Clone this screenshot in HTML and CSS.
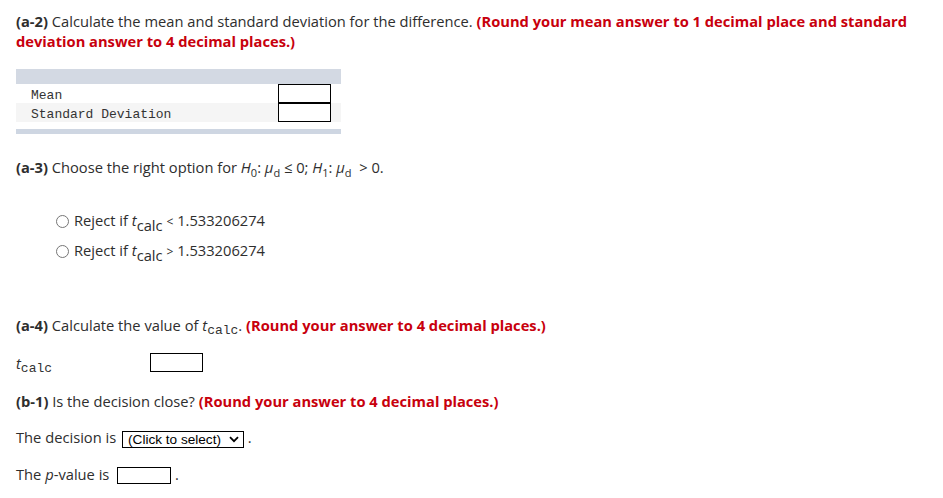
FILE: index.html
```html
<!DOCTYPE html>
<html>
<head>
<meta charset="utf-8">
<link rel="stylesheet" href="styles.css">
</head>
<body>
<div class="page">
  <p class="q q-a2"><b>(a-2)</b> Calculate the mean and standard deviation for the difference. <b class="red">(Round your mean answer to 1 decimal place and standard</b> <b class="red">deviation answer to 4 decimal places.)</b></p>

  <div class="tbl">
    <div class="tbl-head"></div>
    <div class="tbl-row">
      <span class="mono lbl">Mean</span>
      <span class="box"></span>
    </div>
    <div class="tbl-row alt">
      <span class="mono lbl">Standard Deviation</span>
      <span class="box"></span>
    </div>
    <div class="tbl-foot"></div>
  </div>

  <p class="q q-a3"><b>(a-3)</b> Choose the right option for <i>H</i><sub>0</sub>: <i>μ</i><sub>d</sub> ≤ 0; <i>H</i><sub>1</sub>: <i>μ</i><sub>d</sub>&nbsp; &gt; 0.</p>

  <div class="opts">
    <div class="opt"><span class="radio"></span>Reject if <i>t</i><sub class="big">calc</sub> <span class="sm">&lt;</span> 1.533206274</div>
    <div class="opt"><span class="radio"></span>Reject if <i>t</i><sub class="big">calc</sub> <span class="sm">&gt;</span> 1.533206274</div>
  </div>

  <p class="q q-a4"><b>(a-4)</b> Calculate the value of <i>t</i><sub class="mono">calc</sub>. <b class="red">(Round your answer to 4 decimal places.)</b></p>

  <div class="tline">
    <span class="tlabel"><i>t</i><sub class="mono">calc</sub></span>
    <span class="box"></span>
  </div>

  <p class="q q-b1"><b>(b-1)</b> Is the decision close? <b class="red">(Round your answer to 4 decimal places.)</b></p>

  <p class="line line-dec">The decision is <span class="sel">(Click to select)<svg width="10" height="7" viewBox="0 0 10 7"><path d="M1 1.2 L5 5.2 L9 1.2" fill="none" stroke="#000" stroke-width="1.8"/></svg></span> .</p>

  <p class="line line-p">The <i>p</i>-value is <span class="box box-p"></span> .</p>
</div>
</body>
</html>
```
FILE: styles.css
```css
html, body {
  margin: 0;
  padding: 0;
  background: #fff;
}
body {
  font-family: "Open Sans", "Lato", sans-serif;
  font-size: 14.7px;
  color: #2e2e2e;
}
.page {
  padding: 11px 16px 0 16px;
}
.q {
  margin: 0;
  line-height: 19px;
}
.q-a2 {
  line-height: 20px;
}
.q b {
  font-weight: 700;
}
.red {
  color: #c8000d;
}
.mono {
  font-family: "Liberation Mono", "DejaVu Sans Mono", monospace;
  font-size: 13px;
  color: #333;
}
.tbl {
  margin-top: 18px;
  width: 325px;
}
.tbl-head {
  height: 15px;
  background: #d3d9e3;
}
.tbl-row {
  display: flex;
  align-items: center;
  justify-content: space-between;
  height: 19px;
  padding-left: 15px;
  padding-right: 10px;
}
.tbl-row .lbl {
  margin-top: 3px;
}
.tbl-row.alt {
  background: #f5f5f5;
}
.box {
  display: inline-block;
  box-sizing: border-box;
  width: 53px;
  height: 19px;
  border: 1px solid #000;
  background: #fff;
  vertical-align: middle;
}
.tbl-foot {
  margin-top: 7px;
  height: 5px;
  background: #ced6e2;
}
.q-a3 {
  margin-top: 24px;
}
sub {
  font-size: 0.75em;
  vertical-align: -4px;
  line-height: 0;
}
sub.big {
  font-size: 14.7px;
  vertical-align: -5px;
}
.sm {
  font-size: 12px;
}
.opts {
  margin-top: 34px;
  padding-left: 40px;
  display: flex;
  flex-direction: column;
  gap: 11px;
}
.opt {
  line-height: 19px;
  height: 19px;
}
.radio {
  display: inline-block;
  box-sizing: border-box;
  width: 13px;
  height: 13px;
  border: 1px solid #767676;
  border-radius: 50%;
  margin-right: 5px;
  vertical-align: -2px;
}
.q-a4 {
  margin-top: 56px;
}
.q-a4 sub.mono, .tlabel sub.mono {
  font-size: 13px;
  vertical-align: -3px;
}
.tline {
  margin-top: 18px;
  display: flex;
  align-items: center;
  height: 19px;
}
.tlabel {
  width: 134px;
}
.q-b1 {
  margin-top: 20px;
}
.line {
  margin: 0;
  line-height: 19px;
}
.line-dec {
  margin-top: 17px;
}
.sel {
  display: inline-flex;
  align-items: center;
  justify-content: space-between;
  box-sizing: border-box;
  width: 122px;
  height: 17px;
  margin-left: 2px;
  border: 1px solid #000;
  padding: 0 4px 0 5px;
  font-family: "Liberation Sans", Arial, sans-serif;
  font-size: 13.6px;
  color: #000;
  vertical-align: middle;
}
.line-p {
  margin-top: 17px;
}
.box-p {
  height: 17px;
  width: 54px;
  margin-left: 4px;
}
```
